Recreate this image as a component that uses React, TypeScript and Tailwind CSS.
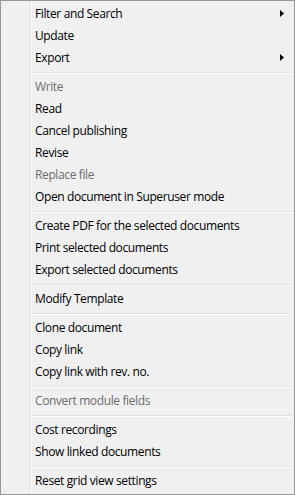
import React from "react";

type Item = { label: string; disabled?: boolean; sub?: boolean } | "sep";

const items: Item[] = [
  { label: "Filter and Search", sub: true },
  { label: "Update" },
  { label: "Export", sub: true },
  "sep",
  { label: "Write", disabled: true },
  { label: "Read" },
  { label: "Cancel publishing" },
  { label: "Revise" },
  { label: "Replace file", disabled: true },
  { label: "Open document in Superuser mode" },
  "sep",
  { label: "Create PDF for the selected documents" },
  { label: "Print selected documents" },
  { label: "Export selected documents" },
  "sep",
  { label: "Modify Template" },
  "sep",
  { label: "Clone document" },
  { label: "Copy link" },
  { label: "Copy link with rev. no." },
  "sep",
  { label: "Convert module fields", disabled: true },
  "sep",
  { label: "Cost recordings" },
  { label: "Show linked documents" },
  "sep",
  { label: "Reset grid view settings" },
];

export default function App() {
  return (
    <div
      className="w-[295px] h-[495px] border border-[#979797] bg-[#f0f0f0] relative"
      style={{ fontFamily: '"Open Sans", "Noto Sans", sans-serif' }}
    >
      <div className="absolute left-[29px] top-[1px] bottom-[1px] w-[1px] bg-[#e2e3e3]" />
      <div className="absolute left-[30px] top-[1px] bottom-[1px] w-[1px] bg-[#ffffff]" />
      <div className="flex flex-col pt-[2px] pb-[2px]">
        {items.map((it, i) =>
          it === "sep" ? (
            <div key={i} className="h-[7px] flex flex-col justify-center pl-[31px] pr-[2px]">
              <div className="h-[1px] bg-[#e0e0e0]" />
              <div className="h-[1px] bg-[#ffffff]" />
            </div>
          ) : (
            <div key={i} className="h-[22px] flex items-center pl-[34px] pr-[10px] relative">
              <span
                className={
                  "text-[12px] leading-none tracking-[-0.38px] " +
                  (it.disabled ? "text-[#6d6d6d]" : "text-[#000000]")
                }
              >
                {it.label}
              </span>
              {it.sub && (
                <svg
                  className="absolute right-[10px] top-[7px]"
                  width="4"
                  height="7"
                  viewBox="0 0 4 7"
                >
                  <path d="M0 0 L4 3.5 L0 7 Z" fill="#000" />
                </svg>
              )}
            </div>
          )
        )}
      </div>
    </div>
  );
}
